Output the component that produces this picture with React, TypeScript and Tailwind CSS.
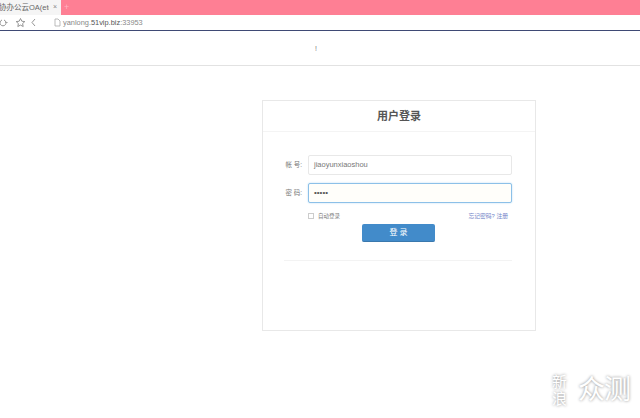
const cjk = "font-['Liberation_Sans','Noto_Sans_CJK_SC',sans-serif]";

function Field({ label, value, focused }: { label: string; value: string; focused?: boolean }) {
  return (
    <div className="flex items-center h-[20px]">
      <span className="w-[45px] pr-[6px] text-right text-[6.5px] text-[#777]">{label}</span>
      <div
        className={
          focused
            ? 'flex items-center w-[204px] h-[20px] pl-[5px] rounded-[2px] border border-[#8cc0e8] bg-[#fffefa] text-[8px] text-[#555] shadow-[0_0_2px_#b5daf4]'
            : 'flex items-center w-[204px] h-[20px] pl-[5px] rounded-[2px] border border-[#e8e8e8] bg-white text-[7.5px] text-[#777]'
        }
      >
        {value}
      </div>
    </div>
  );
}

export default function App() {
  return (
    <div className={`relative w-[640px] h-[418px] overflow-hidden bg-white ${cjk}`}>
      {/* browser chrome */}
      <div className="flex h-[15px] bg-[#fe7f94]">
        <div className="flex items-center w-[61px] bg-[#f5f5f5] text-[7.5px] text-[#666] whitespace-nowrap overflow-hidden">
          <span className="w-[50px] overflow-hidden ml-[-1px]">协办公云OA(etc</span>
          <span className="ml-[4px] text-[7px] text-[#888]">×</span>
        </div>
        <span className="ml-[3px] text-[9px] leading-[14px] text-[#ffb3c0]">+</span>
      </div>
      <div className="flex items-center h-[15px] bg-white">
        <svg width="48" height="15" viewBox="0 0 48 15" fill="none" stroke="#888" strokeWidth="0.9" className="ml-[-3px]">
          <path d="M7 5a3 3 0 1 1-2 0" />
          <path d="M8.500 7l1 1 1-1" />
          <path d="M23.500 3.500l1.300 2.700 3 .4-2.200 2 .6 2.900-2.700-1.400-2.700 1.400.6-2.900-2.200-2 3-.4z" />
          <path d="M38 4l-3 3.500 3 3.500" />
        </svg>
        <svg width="7" height="9" viewBox="0 0 7 9" fill="none" stroke="#aaa" strokeWidth="0.8" className="ml-[9px]">
          <path d="M1 1h3l2 2v5H1z" />
        </svg>
        <span className="ml-[2px] text-[7.4px] text-[#888]">
          yanlong.<span className="text-[#555]">51vip.biz</span>:33953
        </span>
      </div>
      <div className="h-[1px] bg-[#3f4a75]" />

      {/* page header */}
      <div className="flex items-center justify-center h-[35px] pr-[8px] border-b border-[#e2e2e2] bg-white">
        <span className="text-[7px] leading-none text-[#777]">!</span>
      </div>

      {/* login card */}
      <div className="ml-[262px] mt-[34px] w-[274px] h-[231px] border border-[#e8e8e8] bg-white">
        <div className="flex items-center justify-center h-[31px] pt-[1px] border-b border-[#f4f4f4] text-[11px] font-bold text-[#555]">
          用户登录
        </div>
        <div className="flex flex-col gap-[8px] pt-[23px]">
          <Field label="帐 号:" value="jiaoyunxiaoshou" />
          <Field label="密 码:" value="•••••" focused />
        </div>
        <div className="flex items-center justify-between ml-[45px] w-[200px] mt-[8px] h-[10px] text-[5.5px]">
          <div className="flex items-center text-[#777]">
            <span className="w-[6px] h-[6px] border border-[#ccc] bg-white" />
            <span className="ml-[4px]">自动登录</span>
          </div>
          <span className="text-[5.8px] text-[#7385c8]">忘记密码? 注册</span>
        </div>
        <div className="flex justify-center mt-[3px] pr-[1px]">
          <div className="flex items-center justify-center w-[73px] h-[18px] rounded-[2px] bg-[#428bca] border-b border-[#3a78ad] text-[8px] text-white">
            登 录
          </div>
        </div>
        <div className="ml-[21px] mr-[23px] mt-[18px] h-[1px] bg-[#f3f3f3]" />
      </div>

      {/* watermark */}
      <div className="absolute left-[552px] top-[373px] flex items-center text-white [text-shadow:0_0_3px_#888]">
        <span className="w-[16px] text-[15px] leading-[17px]">新浪</span>
        <span className="ml-[10px] text-[27px] leading-none tracking-[-1px] whitespace-nowrap">众测</span>
      </div>
    </div>
  );
}
